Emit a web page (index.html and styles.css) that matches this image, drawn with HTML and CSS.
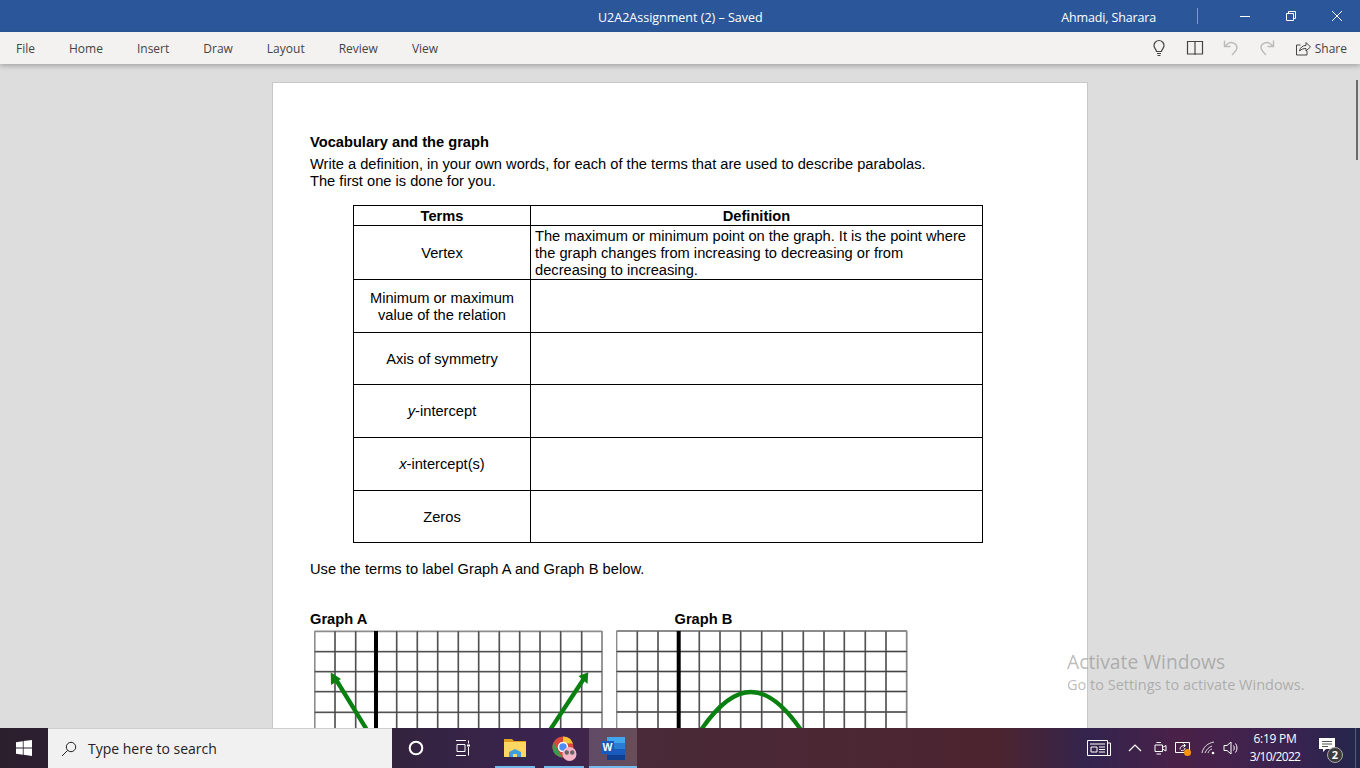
FILE: index.html
```html
<!DOCTYPE html>
<html lang="en">
<head>
<meta charset="utf-8">
<title>U2A2Assignment (2) – Saved</title>
<link rel="stylesheet" href="styles.css">
</head>
<body>
<div class="app">
  <header class="titlebar">
    <div class="doc-title">U2A2Assignment (2) – Saved</div>
    <div class="user">Ahmadi, Sharara</div>
    <div class="sep"></div>
    <div class="winbtns">
      <svg class="winbtn" viewBox="0 0 46 32"><path d="M18 16.500h10" stroke="#fff" fill="none"/></svg>
      <svg class="winbtn" viewBox="0 0 46 32"><path d="M18.500 13.500h7v7h-7zM20.500 13.500v-2h7v7h-2" stroke="#fff" fill="none"/></svg>
      <svg class="winbtn" viewBox="0 0 46 32"><path d="M18 11l10 10M28 11L18 21" stroke="#fff" fill="none"/></svg>
    </div>
  </header>
  <nav class="menubar">
    <div class="tabs">
      <span>File</span><span>Home</span><span>Insert</span><span>Draw</span><span>Layout</span><span>Review</span><span>View</span>
    </div>
    <div class="tools">
      <svg class="tool" viewBox="0 0 18 18"><path d="M6.500 12.500c0-2-2.500-3-2.500-6a5 5 0 0 1 10 0c0 3-2.500 4-2.500 6zM7 14.500h4M7.500 16.500h3" stroke="#444" stroke-width="1.200" fill="none"/></svg>
      <svg class="tool" viewBox="0 0 18 18"><path d="M1.500 2.500h15v12.500h-15zM9 2.500v13.500" stroke="#444" stroke-width="1.200" fill="none"/></svg>
      <svg class="tool" viewBox="0 0 18 18"><path d="M2.500 1.500v6H8.500M2.500 7.500L6 4.500c3-2 9-.5 9 4 0 2.500-2.500 5-5 7.500" stroke="#bbb" stroke-width="1.400" fill="none"/></svg>
      <svg class="tool" viewBox="0 0 18 18"><path d="M15.500 1.500v6H9.500M15.500 7.500L12 4.500c-3-2-9-.5-9 4 0 2.500 2.500 5 5 7.500" stroke="#bbb" stroke-width="1.400" fill="none"/></svg>
      <div class="share">
        <svg class="share-icon" viewBox="0 0 16 16"><path d="M5.500 5H1.500v10h10.500v-4M4.500 11c.5-3.500 3-5.500 6.500-5.500V2.500l4.500 4.500-4.500 4V8.500c-2.500 0-4.500.5-6.500 2.500z" stroke="#444" fill="none"/></svg>
        <span>Share</span>
      </div>
    </div>
  </nav>
  <main class="canvas">
    <article class="page">
      <h1 class="heading">Vocabulary and the graph</h1>
      <p class="intro">Write a definition, in your own words, for each of the terms that are used to describe parabolas.<br>The first one is done for you.</p>
      <table class="vocab">
        <colgroup><col class="col-term"><col class="col-def"></colgroup>
        <thead>
          <tr class="r-head"><th>Terms</th><th>Definition</th></tr>
        </thead>
        <tbody>
          <tr class="r-vertex"><td>Vertex</td><td class="def">The maximum or minimum point on the graph. It is the point where the graph changes from increasing to decreasing or from decreasing to increasing.</td></tr>
          <tr class="r-a"><td>Minimum or maximum<br>value of the relation</td><td></td></tr>
          <tr class="r-b"><td>Axis of symmetry</td><td></td></tr>
          <tr class="r-a"><td class="flat"><i>y</i>-intercept</td><td></td></tr>
          <tr class="r-a"><td class="flat"><i>x</i>-intercept(s)</td><td></td></tr>
          <tr class="r-b"><td>Zeros</td><td></td></tr>
        </tbody>
      </table>
      <p class="use">Use the terms to label Graph A and Graph B below.</p>
      <div class="graph-labels"><b class="label-a">Graph A</b><b>Graph B</b></div>
      <div class="graphs">
        <svg class="graph graph-a" viewBox="0 0 289 100">
          <path class="grid-halo" d="M.7 1V100M21 1V100M41.700 1V100M82.700 1V100M103.300 1V100M123.700 1V100M144.300 1V100M164.700 1V100M185.300 1V100M205.700 1V100M226 1V100M246.700 1V100M267.700 1V100M288 1V100M.7 1.300H288M.7 21.700H288M.7 41.700H288M.7 61.700H288M.7 82.300H288"/>
          <path class="grid" d="M21 1V100M41.700 1V100M82.700 1V100M103.300 1V100M123.700 1V100M144.300 1V100M164.700 1V100M185.300 1V100M205.700 1V100M226 1V100M246.700 1V100M267.700 1V100M.7 21.700H288M.7 41.700H288M.7 61.700H288M.7 82.300H288"/>
          <path class="axis" d="M62 1V100"/>
          <path class="curve" d="M21 48L53 100M271 47L236 100"/>
          <path class="arrow" d="M16.700 42.300L27 49L17 55zM274.300 42.300L273.500 54L264.500 46z"/>
        </svg>
        <svg class="graph graph-b" viewBox="0 0 292 100">
          <path class="grid-halo" d="M.5 1V100M21.300 1V100M42 1V100M83.300 1V100M104 1V100M124.700 1V100M145.700 1V100M166.300 1V100M187.300 1V100M208 1V100M228.300 1V100M249.300 1V100M270 1V100M290.700 1V100M.5 1H291M.5 21.500H291M.5 41.500H291M.5 61.500H291M.5 82H291"/>
          <path class="grid" d="M21.300 1V100M42 1V100M83.300 1V100M104 1V100M124.700 1V100M145.700 1V100M166.300 1V100M187.300 1V100M208 1V100M228.300 1V100M249.300 1V100M270 1V100M.5 21.500H291M.5 41.500H291M.5 61.500H291M.5 82H291"/>
          <path class="axis" d="M62.700 1V100"/>
          <path class="curve" d="M85 100C102 75 119 62 135 62C151 62 168 75 185 100"/>
        </svg>
      </div>
    </article>
    <div class="scroll-thumb"></div>
    <div class="watermark">
      <div class="wm-big">Activate Windows</div>
      <div class="wm-small">Go to Settings to activate Windows.</div>
    </div>
  </main>
  <footer class="taskbar">
    <div class="tb-start">
      <svg class="start-icon" viewBox="0 0 16 16"><path d="M0 2.200l6.800-1v6.300H0zM7.600 1.100L16 0v7.500H7.600zM0 8.400h6.800v6.400L0 13.800zM7.600 8.400H16V16l-8.400-1.200z" fill="#fff"/></svg>
    </div>
    <div class="tb-search">
      <svg class="search-icon" viewBox="0 0 16 16"><circle cx="10" cy="6" r="4.700" stroke="#222" fill="none"/><path d="M6.700 9.300L1 15" stroke="#222" fill="none"/></svg>
      <span>Type here to search</span>
    </div>
    <div class="tb-apps">
      <div class="tb-app"><svg class="cortana" viewBox="0 0 14 14"><circle cx="7" cy="7" r="5.500" stroke="#fff" stroke-width="1.800" fill="none"/></svg></div>
      <div class="tb-app taskview-slot"><svg class="taskview" viewBox="0 0 14 16"><path d="M0 .500h10M0 15.500h10M1 4.500h8v7H1zM12.500 .500v3M12.500 7v8.500" stroke="#fff" fill="none"/><path d="M11 4.500h3v2h-3z" fill="#fff"/></svg></div>
      <div class="tb-app running"><svg class="folder" viewBox="0 0 22 18"><path d="M0 0h8l2 2h12v4H0z" fill="#e0a020"/><path d="M0 3h22v15H0z" fill="#fdd663"/><path d="M5 18v-5l6-3 6 3v5h-4v-3H9v3z" fill="#3f9fdc"/></svg></div>
      <div class="tb-app running"><svg class="chrome" viewBox="0 0 25 25"><circle cx="11" cy="11" r="10.500" fill="#d9483b"/><path d="M11 .500a10.500 10.500 0 0 1 10 7H11z" fill="#f7c331"/><path d="M1.500 6.500L6 14l4 7.500A10.500 10.500 0 0 1 1.500 6.500z" fill="#3b9a4f"/><circle cx="11" cy="11" r="4.500" fill="#4d8df2" stroke="#fff" stroke-width="1.500"/><circle cx="17.500" cy="18" r="7" fill="#f5b5c8"/><circle cx="14.800" cy="16.500" r="2.200" fill="#666"/><circle cx="20.200" cy="16.500" r="2.200" fill="#666"/></svg></div>
      <div class="tb-app running active"><svg class="word" viewBox="0 0 24 23"><path d="M6 0h18v6H6z" fill="#41a5ee"/><path d="M6 6h18v6H6z" fill="#2b7cd3"/><path d="M6 12h18v6H6z" fill="#185abd"/><path d="M6 18h18v5H6z" fill="#103f91"/><path d="M0 4h13v13H0z" fill="#185abd"/></svg><b class="word-w">W</b></div>
    </div>
    <div class="tb-tray">
      <svg class="news" viewBox="0 0 24 16"><path d="M.500 .500h20v15H.500zM20.500 3h3v12.500h-3M3 4h15M4 7h6v5H4zM12 7h6M12 9.500h6M12 12h6" stroke="#fff" fill="none"/></svg>
      <svg class="chevron" viewBox="0 0 14 14"><path d="M1 10l6-6 6 6" stroke="#fff" stroke-width="1.200" fill="none"/></svg>
      <svg class="meet" viewBox="0 0 16 16"><path d="M3 5h7.500v6.500H3zM10.500 7.500l3.500-2v5.500l-3.500-2M4.500 2.500h4.500M4.500 14h4.500" stroke="#fff" fill="none"/></svg>
      <div class="capture">
        <svg class="capture-ic" viewBox="0 0 16 16"><path d="M.500 2.500h14v10h-14zM5 9.500c0-3 2-4 5-4M8.500 3.500l2 2-2 2M10 8c0 2-2 3-4 2.500" stroke="#fff" fill="none"/></svg>
        <span class="dot"></span>
      </div>
      <svg class="wifi" viewBox="0 0 16 16"><path d="M1 13C2 7 7 3 13 2M4 13c1-3 4-6 7-7M7 13c.5-2 2-3.500 4-4" stroke="#ddd" fill="none"/><circle cx="12" cy="13" r="1.300" fill="#fff"/></svg>
      <svg class="speaker" viewBox="0 0 16 16"><path d="M1 5.500h3L8 2v12l-4-3.500H1zM10.500 5.500c1 1.500 1 3.500 0 5M12.500 3.500c2 2.500 2 6.500 0 9" stroke="#fff" fill="none"/></svg>
      <div class="clock"><div>6:19 PM</div><div class="clock-date">3/10/2022</div></div>
      <div class="notif">
        <svg class="notif-ic" viewBox="0 0 16 14"><path d="M0 0h16v11H7l-3 3v-3H0z" fill="#fff"/><path d="M3 3.500h10M3 6h10M3 8.500h6" stroke="#555"/></svg>
        <span class="badge">2</span>
      </div>
      <div class="show-desktop"></div>
    </div>
  </footer>
</div>
</body>
</html>
```
FILE: styles.css
```css
* { box-sizing: border-box; }
html, body { margin: 0; padding: 0; height: 100%; overflow: hidden; }
.app { width: 1360px; height: 768px; display: flex; flex-direction: column; overflow: hidden; font-family: "Open Sans", "Noto Sans", sans-serif; }

.titlebar { position: relative; flex: 0 0 32px; height: 32px; background: #2b579a; color: #fff; display: flex; align-items: center; justify-content: flex-end; font-size: 12.500px; }
.doc-title { position: absolute; left: 598px; top: 9px; line-height: 18px; white-space: nowrap; }
.user { margin-right: 41px; padding-top: 2px; letter-spacing: -0.15px; }
.sep { width: 1px; height: 16px; background: #7f9cc6; margin-right: 24px; }
.winbtns { display: flex; }
.winbtn { width: 46px; height: 32px; display: block; }

.menubar { position: relative; z-index: 2; flex: 0 0 32px; height: 32px; background: #f3f2f1; display: flex; align-items: center; justify-content: space-between; box-shadow: 0 2px 5px rgba(0,0,0,.25); font-size: 12px; color: #444; }
.tabs { display: flex; gap: 34px; padding-left: 16px; }
.tools { display: flex; align-items: center; gap: 18px; padding-right: 13px; }
.tool { width: 18px; height: 18px; display: block; }
.share { display: flex; align-items: center; gap: 4px; margin-left: 1px; }
.share-icon { width: 16px; height: 16px; display: block; }

.canvas { position: relative; flex: 1; min-height: 0; background: #dddddd; overflow: hidden; padding: 18px 0 0 272px; }
.page { width: 816px; height: 700px; background: #fff; border: 1px solid #c8c8c8; padding: 51px 0 0 37px; font-family: "Liberation Sans", Arial, sans-serif; font-size: 14.670px; line-height: 17px; color: #000; }
.heading { margin: 0; font-size: 14.670px; font-weight: 700; line-height: 17px; }
.intro { margin: 5px 0 0; }
.vocab { margin: 15px 0 0 43px; width: 630px; border-collapse: collapse; table-layout: fixed; }
.col-term { width: 177px; }
.vocab th, .vocab td { border: 1px solid #000; padding: 2px 4px 0; text-align: center; vertical-align: middle; font-size: 14.670px; line-height: 17px; }
.vocab td.flat { padding-top: 0; }
.vocab td.def { text-align: left; padding-top: 1px; padding-right: 12px; }
.r-head { height: 20px; }
.r-head th { padding-top: 0; line-height: 18px; vertical-align: bottom; }
.r-vertex { height: 54px; }
.r-a { height: 53px; }
.r-b { height: 52px; }
.use { margin: 18px 0 0; letter-spacing: .04px; }
.graph-labels { margin-top: 33px; display: flex; font-weight: 700; }
.label-a { width: 364.500px; }
.graphs { margin-top: 2px; padding-left: 4px; display: flex; gap: 13px; }
.graph { display: block; height: 100px; flex: none; }
.graph-a { width: 289px; }
.graph-b { width: 292px; }
.grid-halo { stroke: #8c8c8c; stroke-width: 1.800; fill: none; }
.grid { stroke: #3c3c3c; stroke-width: .9; fill: none; }
.axis { stroke: #000; stroke-width: 4; fill: none; }
.curve { stroke: #0a8010; stroke-width: 4.300; fill: none; }
.arrow { fill: #0a8010; }

.scroll-thumb { position: absolute; left: 1356px; top: 16px; width: 2px; height: 80px; background: #6b6b6b; }
.watermark { position: absolute; left: 1067px; top: 585px; color: rgba(130,130,130,.55); font-family: "Open Sans", "Noto Sans", sans-serif; white-space: nowrap; }
.wm-big { font-size: 19.300px; line-height: 25px; }
.wm-small { font-size: 14.500px; line-height: 20px; margin-top: 1px; }

.taskbar { position: relative; z-index: 3; flex: 0 0 40px; height: 40px; display: flex; color: #fff; background: linear-gradient(90deg, #2b1f2e 0, #33233f 400px, #3b2450 560px, #4a2a38 640px, #4c2430 1000px, #33244e 1090px, #4a2148 1180px, #3a2350 1290px, #23264a 1360px); }
.tb-start { width: 48px; display: flex; align-items: center; justify-content: center; }
.start-icon { width: 16px; height: 16px; display: block; }
.tb-search { width: 344px; background: #f1f1f1; border-top: 1px solid #cfcfcf; color: #222; display: flex; align-items: center; gap: 11px; padding-left: 13px; font-size: 14px; }
.search-icon { width: 16px; height: 16px; display: block; }
.tb-apps { display: flex; }
.tb-app { position: relative; width: 48px; display: flex; align-items: center; justify-content: center; }
.taskview-slot { width: 46px; margin-right: 5px; }
.tb-app.running { margin-right: 1px; }
.tb-app.running::after { content: ""; position: absolute; left: 4px; right: 4px; bottom: 0; height: 2px; background: #76b9ed; }
.tb-app.active { background: rgba(255,255,255,.17); }
.tb-app.active::after { left: 0; right: 0; }
.cortana { width: 16px; height: 16px; display: block; }
.taskview { width: 14px; height: 16px; display: block; }
.folder { width: 22px; height: 18px; display: block; }
.chrome { width: 25px; height: 25px; display: block; }
.word { width: 24px; height: 23px; display: block; }
.word-w { position: absolute; left: 12px; top: 13px; width: 13px; font-size: 10.500px; line-height: 13px; text-align: center; font-family: "Liberation Sans", Arial, sans-serif; color: #fff; }
.tb-tray { margin-left: auto; display: flex; align-items: center; }
.news { width: 24px; height: 16px; display: block; margin-right: 17px; }
.chevron { width: 14px; height: 14px; display: block; margin-right: 10px; }
.meet { width: 16px; height: 16px; display: block; margin-right: 7px; }
.capture { position: relative; margin-right: 10px; }
.capture-ic { width: 16px; height: 16px; display: block; }
.wifi { width: 16px; height: 16px; display: block; margin-right: 6px; }
.speaker { width: 16px; height: 16px; display: block; margin-right: 5px; }
.dot { position: absolute; left: 9px; top: 9px; width: 7px; height: 7px; border-radius: 50%; background: #f7930e; }
.clock { width: 62px; text-align: center; font-size: 12px; line-height: 18px; letter-spacing: -0.25px; }
.clock-date { letter-spacing: -0.7px; }
.notif { position: relative; width: 30px; height: 30px; margin-left: 13px; margin-right: 6px; }
.notif-ic { position: absolute; left: 0; top: 5px; width: 16px; height: 14px; display: block; }
.badge { position: absolute; left: 8px; top: 14px; width: 16px; height: 16px; border-radius: 50%; background: #3c3c3c; border: 1px solid #aaa; font-size: 11px; line-height: 14px; text-align: center; font-weight: 700; }
.show-desktop { width: 5px; height: 40px; border-left: 1px solid #555a78; }
```
